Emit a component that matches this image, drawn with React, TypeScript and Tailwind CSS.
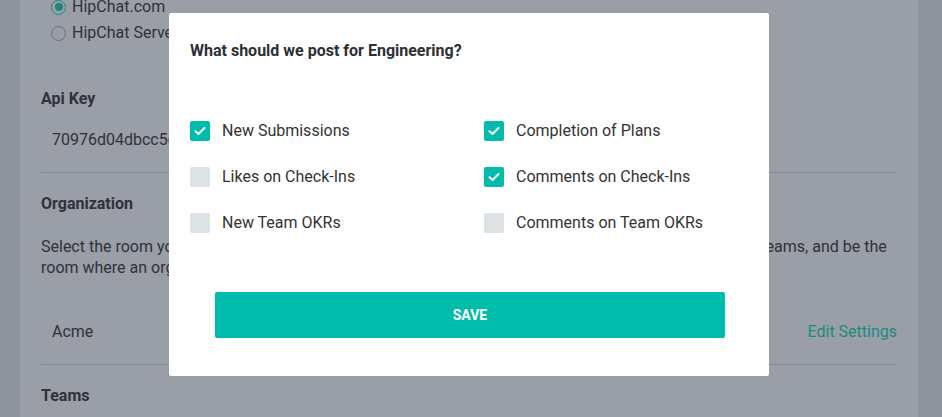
import React from "react";

function Radio({ checked }: { checked?: boolean }) {
  return checked ? (
    <span className="flex h-[15px] w-[15px] items-center justify-center rounded-full border-[1.5px] border-[#2a857c]">
      <span className="h-[8px] w-[8px] rounded-full bg-[#1d8a80]" />
    </span>
  ) : (
    <span className="h-[15px] w-[15px] rounded-full border-[1.5px] border-[#6c7078]" />
  );
}

function Check({ checked }: { checked?: boolean }) {
  return checked ? (
    <span className="flex h-[20px] w-[20px] shrink-0 items-center justify-center rounded-[2px] bg-[#00bcaa]">
      <svg width="12" height="10" viewBox="0 0 12 10" fill="none">
        <path d="M1.5 5.2 L4.5 8 L10.5 2" stroke="white" strokeWidth="2" strokeLinecap="round" strokeLinejoin="round" />
      </svg>
    </span>
  ) : (
    <span className="h-[20px] w-[20px] shrink-0 rounded-[2px] bg-[#dde2e5]" />
  );
}

function Option({ label, checked }: { label: string; checked?: boolean }) {
  return (
    <div className="flex h-[20px] items-center gap-[12px]">
      <Check checked={checked} />
      <span className="text-[16px] leading-5 text-[#333]">{label}</span>
    </div>
  );
}

export default function App() {
  return (
    <div className="relative flex h-[417px] w-[942px] overflow-hidden bg-[#8f939c] font-['Roboto',sans-serif] text-[#2f3238]">
      <div className="w-[20px] shrink-0" />
      <div className="w-[898px] shrink-0 bg-[#9a9ea6] px-[21px]">
        <div className="mt-[-6px] flex flex-col">
          <div className="flex h-[26px] items-center gap-[6px] pl-[10px] text-[16px]">
            <Radio checked />
            <span>HipChat.com</span>
          </div>
          <div className="flex h-[26px] items-center gap-[6px] pl-[10px] text-[16px]">
            <Radio />
            <span>HipChat Server</span>
          </div>
          <div className="mt-[43px] text-[16px] font-bold leading-5">Api Key</div>
          <div className="mt-[21px] pl-[11px] text-[16px] leading-5">70976d04dbcc5e1f8a2b3c4d5e6f7a8b</div>
          <div className="mt-[22px] h-px bg-[#868a93]" />
          <div className="mt-[21px] text-[16px] font-bold leading-5">Organization</div>
          <p className="mt-[22px] text-[16px] leading-[21px]">
            Select the room you want to receive organization updates. This room will also get all updates from all teams, and be the
            <br />
            room where an organization's OKRs are posted.
          </p>
          <div className="mt-[43.5px] flex items-center justify-between text-[16px] leading-5">
            <span className="pl-[11px]">Acme</span>
            <span className="text-[#1d8a80]">Edit Settings</span>
          </div>
          <div className="mt-[22px] h-px bg-[#868a93]" />
          <div className="mt-[21px] text-[16px] font-bold leading-5">Teams</div>
        </div>
      </div>
      <div className="w-[24px] shrink-0" />

      <div className="absolute left-[169px] top-[13px] flex h-[363px] w-[600px] flex-col rounded-[2px] bg-white pl-[21px]">
        <div className="mt-[28px] text-[16px] font-bold leading-5 text-[#2d2f33]">What should we post for Engineering?</div>
        <div className="mt-[60px] grid grid-cols-[294px_1fr] gap-y-[26px]">
          <Option label="New Submissions" checked />
          <Option label="Completion of Plans" checked />
          <Option label="Likes on Check-Ins" />
          <Option label="Comments on Check-Ins" checked />
          <Option label="New Team OKRs" />
          <Option label="Comments on Team OKRs" />
        </div>
        <button className="ml-[25px] mt-[59px] flex h-[46px] w-[510px] items-center justify-center rounded-[2px] bg-[#00bcaa] text-[14px] font-bold text-white">
          SAVE
        </button>
      </div>
    </div>
  );
}
